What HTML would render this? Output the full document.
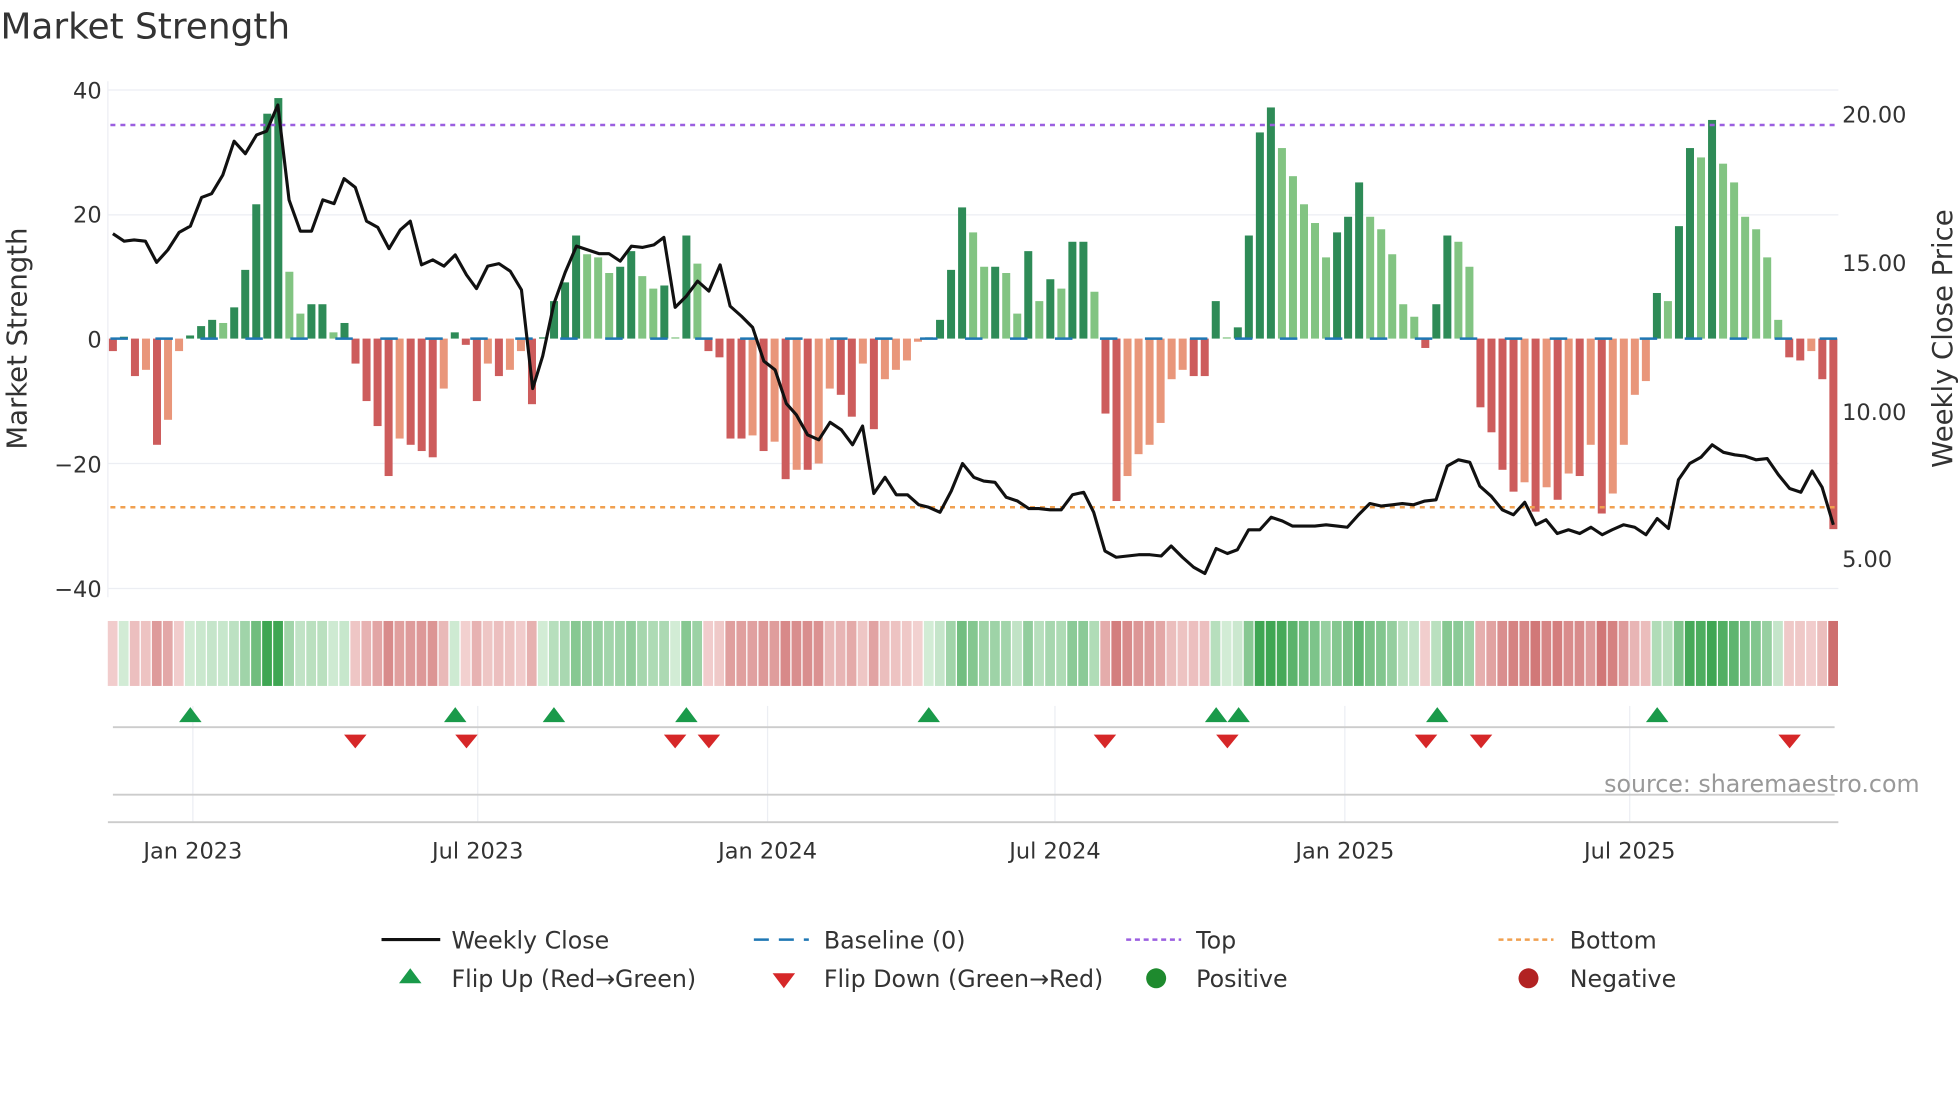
<!DOCTYPE html>
<html><head><meta charset="utf-8">
<style>
html,body{margin:0;padding:0;background:#fff;width:1960px;height:1102px;overflow:hidden}
svg{display:block}
text{font-family:"DejaVu Sans","Liberation Sans",sans-serif;fill:#333}
</style></head>
<body>
<svg id="s" width="1960" height="1102" viewBox="0 0 1568 882" xmlns="http://www.w3.org/2000/svg">
<text x="0" y="31" font-size="28.7">Market Strength</text>
<g stroke="#eceef3" stroke-width="1">
<line x1="86" x2="1471" y1="72" y2="72"/><line x1="86" x2="1471" y1="172" y2="172"/>
<line x1="86" x2="1471" y1="371" y2="371"/><line x1="86" x2="1471" y1="471" y2="471"/>
<line x1="86" x2="86" y1="65" y2="478"/>
</g>
<g font-size="18" text-anchor="end">
<text x="81" y="79">40</text><text x="81" y="178">20</text><text x="81" y="278">0</text>
<text x="81" y="378">−20</text><text x="81" y="478">−40</text>
</g>
<g font-size="18">
<text x="1474" y="98">20.00</text><text x="1474" y="217">15.00</text>
<text x="1474" y="336">10.00</text><text x="1474" y="454">5.00</text>
</g>
<text font-size="22" transform="translate(21,271) rotate(-90)" text-anchor="middle">Market Strength</text>
<text font-size="22" transform="translate(1562,271) rotate(-90)" text-anchor="middle">Weekly Close Price</text>
<g id="bars"></g>
<g id="heat"></g>
<line x1="88" x2="1470" y1="100" y2="100" stroke="#9b5fe0" stroke-width="2" stroke-dasharray="4,4"/>
<line x1="88" x2="1470" y1="406" y2="406" stroke="#f0a050" stroke-width="2" stroke-dasharray="4,4"/>
<line x1="88" x2="1470" y1="271" y2="271" stroke="#1f77b4" stroke-width="2" stroke-dasharray="14,22"/>
<polyline id="price" fill="none" stroke="#111" stroke-width="2.5" stroke-linejoin="round"/>
<g stroke="#eceef3" stroke-width="1">
<line x1="154" x2="154" y1="565" y2="658"/><line x1="382" x2="382" y1="565" y2="658"/>
<line x1="614" x2="614" y1="565" y2="658"/><line x1="844" x2="844" y1="565" y2="658"/>
<line x1="1076" x2="1076" y1="565" y2="658"/><line x1="1304" x2="1304" y1="565" y2="658"/>
</g>
<line x1="90" x2="1468" y1="582" y2="582" stroke="#ccc" stroke-width="1.5"/>
<line x1="90" x2="1468" y1="636" y2="636" stroke="#ccc" stroke-width="1.5"/>
<line x1="86" x2="1471" y1="658" y2="658" stroke="#ccc" stroke-width="1.5"/>
<g id="flips"></g>
<text x="1536" y="634" font-size="19" text-anchor="end" style="fill:#999">source: sharemaestro.com</text>
<g font-size="18" text-anchor="middle">
<text x="154" y="687">Jan 2023</text><text x="382" y="687">Jul 2023</text>
<text x="614" y="687">Jan 2024</text><text x="844" y="687">Jul 2024</text>
<text x="1076" y="687">Jan 2025</text><text x="1304" y="687">Jul 2025</text>
</g>
<g font-size="19">
<line x1="305" x2="352" y1="752" y2="752" stroke="#111" stroke-width="2.5"/>
<text x="361" y="759">Weekly Close</text>
<line x1="603" x2="647" y1="752" y2="752" stroke="#1f77b4" stroke-width="2" stroke-dasharray="12,8"/>
<text x="659" y="759">Baseline (0)</text>
<line x1="901" x2="945" y1="752" y2="752" stroke="#9b5fe0" stroke-width="2" stroke-dasharray="4,3"/>
<text x="957" y="759">Top</text>
<line x1="1199" x2="1243" y1="752" y2="752" stroke="#f0a050" stroke-width="2" stroke-dasharray="4,3"/>
<text x="1256" y="759">Bottom</text>
<polygon points="328,775 319,787 337,787" fill="#1a9a4a"/>
<text x="361" y="790">Flip Up (Red→Green)</text>
<polygon points="618,779 636,779 627,791" fill="#d62728"/>
<text x="659" y="790">Flip Down (Green→Red)</text>
<circle cx="925" cy="783" r="8" fill="#1e8a2e"/>
<text x="957" y="790">Positive</text>
<circle cx="1223" cy="783" r="8" fill="#b22222"/>
<text x="1256" y="790">Negative</text>
</g>
</svg>
<script>
var v=[-2,0.3,-6,-5,-17,-13,-2,0.5,2,3,2.5,5,11,21.5,36,38.5,10.7,4,5.5,5.5,1,2.5,-4,-10,-14,-22,-16,-17,-18,-19,-8,1,-1,-10,-4,-6,-5,-2,-10.5,0.2,6,9,16.5,13.5,13,10.5,11.5,14,10,8,8.5,0.2,16.5,12,-2,-3,-16,-16,-15.5,-18,-16.5,-22.5,-21,-21,-20,-8,-9,-12.5,-4,-14.5,-6.5,-5,-3.5,-0.5,0.2,3,11,21,17,11.5,11.5,10.5,4,14,6,9.5,8,15.5,15.5,7.5,-12,-26,-22,-18.5,-17,-13.5,-6.5,-5,-6,-6,6,0.2,1.8,16.5,33,37,30.5,26,21.5,18.5,13,17,19.5,25,19.5,17.5,13.5,5.5,3.5,-1.5,5.5,16.5,15.5,11.5,
-11,-15,-21,-24.5,-23,-27.7,-23.8,-25.8,-21.6,-22,-17,-28,-24.8,-17,-9,-6.8,
7.3,6,18,30.5,29,35,28,25,19.5,17.5,13,3,-3,-3.5,-2,-6.5,-30.5];
var NS="http://www.w3.org/2000/svg";
function el(t,a,p){var e=document.createElementNS(NS,t);for(var k in a)e.setAttribute(k,a[k]);document.getElementById(p).appendChild(e);return e;}
function mix(a,b,t){var r='#';for(var i=0;i<3;i++){var x=parseInt(a.substr(1+2*i,2),16),y=parseInt(b.substr(1+2*i,2),16);var z=Math.round(x+(y-x)*t);r+=(z<16?'0':'')+z.toString(16);}return r;}
var step=(1467-90)/(v.length-1);
for(var i=0;i<v.length;i++){
 var x=90+i*step,val=v[i],prev=i?v[i-1]:0;
 var light=Math.abs(val)<Math.abs(prev)&&(val*prev>0);
 var c=val>=0?(light?'#82c482':'#2e8b57'):(light?'#e9967a':'#cd5c5c');
 var y0=271,y1=271-val*5;
 el('rect',{x:x-3.2,y:Math.min(y0,y1),width:6.4,height:Math.abs(y1-y0),fill:c},'bars');
 var t=Math.min(Math.abs(val)/32,1);
 var hc=val>=0?mix('#d3ecd6','#3fa653',t):mix('#f3d3d2','#cc6a6a',t);
 el('rect',{x:x-4.1,y:497,width:7.8,height:52,fill:hc},'heat');
}
var p=[[90,187],[99,193],[107,192],[116,193],[125,210],[134,200],[143,186],[152,181],[161,158],[169,155],[178,140],[187,113],[196,123],[205,108],[213,105],[222,84],[231,160],[240,185],[249,185],[258,160],[267,163],[275,143],[284,150],[293,177],[302,182],[311,199],[320,184],[328,177],[337,212],[346,208],[355,213],[364,204],[373,220],[381,231],[390,213],[399,211],[408,217],[417,232],[426,311],[434,285],[443,243],[452,218],[461,197],[470,200],[479,203],[487,203],[496,209],[505,197],[514,198],[523,196],[531,190],[540,246],[549,237],[558,225],[567,233],[576,212],[584,245],[593,253],[602,262],[611,289],[620,296],[629,323],[637,332],[646,348],[655,352],[664,338],[673,344],[682,356],[690,341],[699,395],[708,382],[717,396],[726,396],[735,404],[743,406],[752,410],[761,393],[770,371],[779,382],[787,385],[796,386],[805,398],[814,401],[823,407],[831,407],[840,408],[849,408],[858,396],[867,394],[875,410],[884,441],[893,446],[902,445],[911,444],[920,444],[929,445],[937,437],[946,446],[955,454],[964,459],[973,439],[982,443],[990,440],[999,424],[1008,424],[1017,414],[1026,417],[1034,421],[1043,421],[1052,421],[1061,420],[1070,421],[1078,422],[1087,412],[1096,403],[1105,405],[1114,404],[1122,403],[1131,404],[1140,401],[1149,400],[1158,373],[1167,368],[1176,370],[1184,389],[1193,397],[1202,408],[1211,412],[1220,402],[1229,420],[1237,416],[1246,427],[1255,424],[1264,427],[1273,422],[1282,428],[1290,424],[1299,420],[1308,422],[1317,428],[1326,415],[1335,423],[1343,384],[1352,371],[1361,366],[1370,356],[1379,362],[1388,364],[1396,365],[1405,368],[1414,367],[1423,380],[1432,391],[1441,394],[1450,377],[1458,390],[1467,420]];
document.getElementById('price').setAttribute('points',p.map(function(a){return a.join(',')}).join(' '));
[152,364,443,549,743,973,991,1150,1326].forEach(function(x){el('polygon',{points:(x)+',566 '+(x-9)+',578 '+(x+9)+',578',fill:'#1a9a4a'},'flips');});
[284,373,540,567,884,982,1141,1185,1432].forEach(function(x){el('polygon',{points:(x-9)+',588 '+(x+9)+',588 '+x+',599',fill:'#d62728'},'flips');});
</script>
</body></html>
